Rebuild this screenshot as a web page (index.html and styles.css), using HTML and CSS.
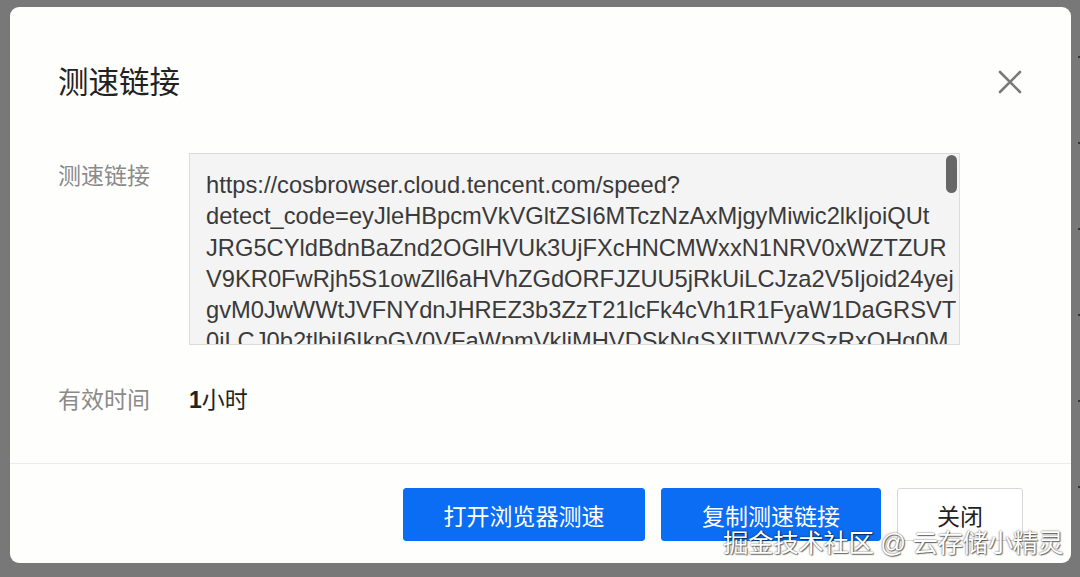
FILE: index.html
```html
<!DOCTYPE html>
<html lang="zh-CN">
<head>
  <meta charset="UTF-8">
  <title>测速链接</title>
  <link rel="stylesheet" href="styles.css">
</head>
<body>

  <!-- page behind the modal, only its right edge shows -->
  <div class="backdrop-edge">
    <span class="dot"></span>
    <span class="dot"></span>
    <span class="dot"></span>
    <span class="dot"></span>
    <span class="dot"></span>
    <span class="dot"></span>
  </div>

  <div class="dialog" role="dialog" aria-labelledby="dialog-title">
    <div class="dialog-header">
      <h2 id="dialog-title">测速链接</h2>
      <button class="dialog-close" aria-label="关闭">
        <svg width="24" height="24" viewBox="0 0 24 24">
          <path d="M2 2 L22 22 M22 2 L2 22" stroke="#7a7a7a" stroke-width="2.6" stroke-linecap="round" fill="none"/>
        </svg>
      </button>
    </div>

    <div class="dialog-body">
      <div class="form-row">
        <label class="form-label">测速链接</label>
        <div class="link-box">
          <div class="link-text">https://cosbrowser.cloud.tencent.com/speed?<br>detect_code=eyJleHBpcmVkVGltZSI6MTczNzAxMjgyMiwic2lkIjoiQUt<br>JRG5CYldBdnBaZnd2OGlHVUk3UjFXcHNCMWxxN1NRV0xWZTZUR<br>V9KR0FwRjh5S1owZll6aHVhZGdORFJZUU5jRkUiLCJza2V5Ijoid24yej<br>gvM0JwWWtJVFNYdnJHREZ3b3ZzT21lcFk4cVh1R1FyaW1DaGRSVT<br>0iLCJ0b2tlbiI6IkpGV0VFaWpmVkliMHVDSkNqSXlITWVZSzRxOHg0M</div>
          <span class="scroll-thumb"></span>
        </div>
      </div>

      <div class="form-row row-expire">
        <label class="form-label">有效时间</label>
        <div class="form-value"><b>1</b>小时</div>
      </div>
    </div>

    <div class="dialog-footer">
      <button class="btn btn-primary btn-open">打开浏览器测速</button>
      <button class="btn btn-primary btn-copy">复制测速链接</button>
      <button class="btn btn-default">关闭</button>
    </div>

    <div class="watermark">掘金技术社区 @ 云存储小精灵</div>
  </div>

</body>
</html>
```

FILE: styles.css
```css
body {
  margin: 0;
  height: 577px;
  overflow: hidden;
  background-color: #787878;
  font-family: "Liberation Sans", "Noto Sans CJK SC", sans-serif;
  position: relative;
}

.backdrop-edge {
  position: absolute;
  top: 0;
  right: 0;
  width: 9px;
  height: 577px;
  display: flex;
  flex-direction: column;
  align-items: flex-end;
  gap: 84px;
  padding-top: 56px;
  box-sizing: border-box;
}

.backdrop-edge .dot {
  width: 2px;
  height: 2px;
  background-color: #333;
}

.dialog {
  position: relative;
  margin: 7px 0 0 10px;
  width: 1061px;
  height: 556px;
  background-color: #fefefd;
  border-radius: 9px;
  display: flex;
  flex-direction: column;
}

.dialog-header {
  display: flex;
  align-items: center;
  justify-content: space-between;
  padding: 55px 48px 0 48px;
  height: 40px;
}

.dialog-header h2 {
  margin: 0;
  font-size: 30.5px;
  font-weight: normal;
  line-height: 40px;
  color: #222;
}

.dialog-close {
  background: none;
  border: none;
  padding: 0;
  margin-right: 1px;
  cursor: pointer;
  display: flex;
}

.dialog-body {
  padding: 51px 48px 0 48px;
  flex: 1;
}

.form-row {
  display: flex;
}

.form-label {
  width: 131px;
  flex-shrink: 0;
  font-size: 23px;
  color: #8a8a8a;
  line-height: 30px;
  padding-top: 8px;
}

.link-box {
  position: relative;
  width: 771px;
  height: 192px;
  box-sizing: border-box;
  border: 1px solid #dcdcdc;
  background-color: #f4f4f4;
  overflow: hidden;
}

.link-text {
  padding: 16px 16px 0 16px;
  font-size: 23.7px;
  line-height: 31.3px;
  color: #3a3a3a;
  white-space: nowrap;
}

.scroll-thumb {
  position: absolute;
  top: 1px;
  right: 2px;
  width: 11px;
  height: 38px;
  border-radius: 6px;
  background-color: #666;
}

.row-expire {
  margin-top: 40px;
}

.row-expire .form-label {
  padding-top: 0;
}

.form-value {
  font-size: 23px;
  line-height: 30px;
  color: #222;
}

.form-value b {
  font-weight: bold;
}

.dialog-footer {
  border-top: 1px solid #ececec;
  display: flex;
  justify-content: flex-end;
  gap: 16px;
  padding: 24px 48px 22px 0;
}

.btn {
  height: 53px;
  font-family: inherit;
  font-size: 23px;
  border-radius: 3px;
  cursor: pointer;
}

.btn-primary {
  background-color: #0b6cf4;
  border: 1px solid #0b6cf4;
  color: #fff;
}

.btn-open {
  width: 242px;
}

.btn-copy {
  width: 220px;
}

.btn-default {
  width: 126px;
  background-color: #fff;
  border: 1px solid #d8d8d8;
  color: #222;
}

.watermark {
  position: absolute;
  right: 8px;
  bottom: 4px;
  font-size: 25.5px;
  color: #fff;
  letter-spacing: -0.4px;
  text-shadow: 0 0 2px rgba(0,0,0,0.7), 1px 1px 1px rgba(0,0,0,0.5);
}
```
